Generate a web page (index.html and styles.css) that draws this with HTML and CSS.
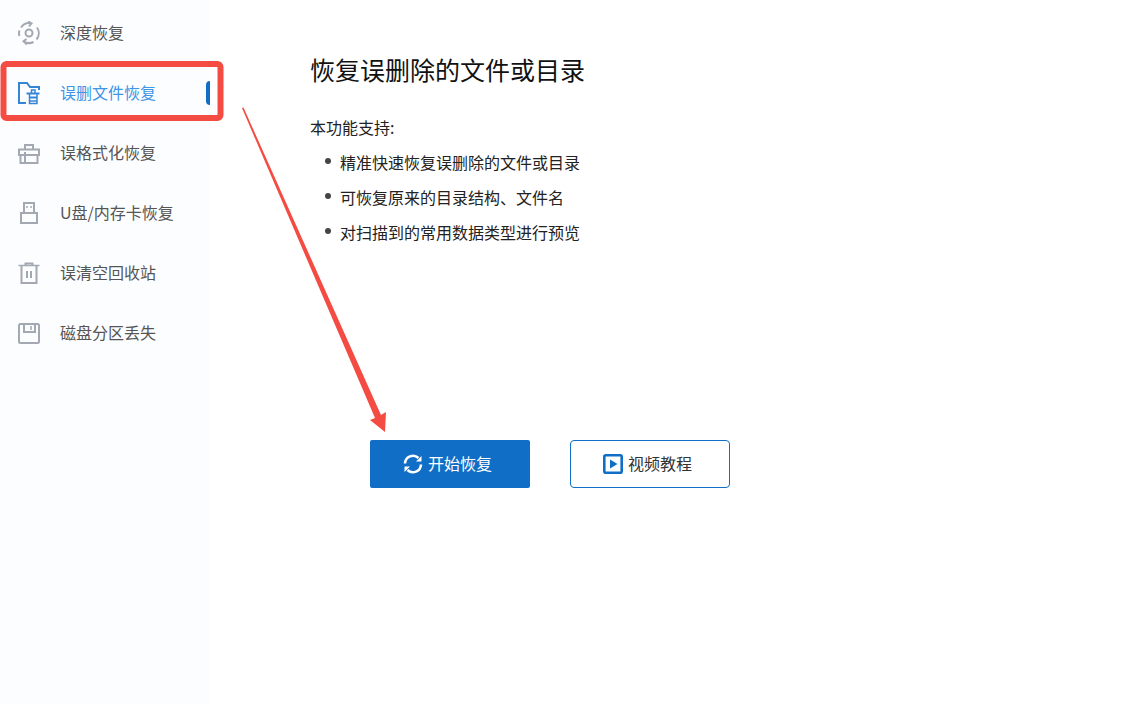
FILE: index.html
```html
<!DOCTYPE html>
<html lang="zh-CN">
<head>
  <meta charset="UTF-8">
  <title>误删文件恢复</title>
  <link rel="stylesheet" href="styles.css">
</head>
<body>
  <div class="page">
    <div class="sidebar">
      <div class="nav-item">
        <svg class="nav-icon" viewBox="0 0 24 24"><path d="M4 6.500A10 10 0 0 1 14.500 2.300M11 .5l3.500 1.800-2.500 3M20 6.500A10 10 0 0 1 19.500 18.500M16.500 21A10 10 0 0 1 6.500 20.300M10 23.500l-3.500-3.200 3-2.300M2.400 15A10 10 0 0 1 2.400 9.500"/><circle cx="12" cy="12" r="3.500"/></svg>
        <span>深度恢复</span>
      </div>
      <div class="nav-item active">
        <svg class="nav-icon" viewBox="0 0 24 24"><path d="M9 22H2V2h8l3 4h9v3"/><path d="M9.500 12.500h13"/><path class="thin" d="M12.500 12.500v10h7.500v-10M14.500 12V9h3.500v3"/><path d="M13 16.500h7"/><path class="thin" d="M13 20h7"/></svg>
        <span>误删文件恢复</span>
        <i class="marker"></i>
      </div>
      <div class="nav-item">
        <svg class="nav-icon" viewBox="0 0 24 24"><path d="M2 8.500h20v5.500H2zM3.500 14v8h17v-8M8 8.500V4h8v4.500M8 11v11"/></svg>
        <span>误格式化恢复</span>
      </div>
      <div class="nav-item">
        <svg class="nav-icon" viewBox="0 0 24 24"><path d="M4 12h16v10H4zM7 12V2h10v10"/><path class="thin" d="M10 5v2M14 5v2"/></svg>
        <span>U盘/内存卡恢复</span>
      </div>
      <div class="nav-item">
        <svg class="nav-icon" viewBox="0 0 24 24"><path class="thin" d="M1.500 4.500h21"/><path d="M4.500 5v17h15V5M8.500 4.500V2.500h7v2M10 10v7M14 10v7"/></svg>
        <span>误清空回收站</span>
      </div>
      <div class="nav-item">
        <svg class="nav-icon" viewBox="0 0 24 24"><rect x="2" y="3" width="20" height="19" rx="1.500"/><path d="M7 3v8h11V3"/><path class="thin" d="M14 5v4"/></svg>
        <span>磁盘分区丢失</span>
      </div>
    </div>

    <div class="main">
      <h1>恢复误删除的文件或目录</h1>
      <p class="intro">本功能支持:</p>
      <ul class="features">
        <li>精准快速恢复误删除的文件或目录</li>
        <li>可恢复原来的目录结构、文件名</li>
        <li>对扫描到的常用数据类型进行预览</li>
      </ul>
      <div class="actions">
        <button class="btn btn-primary">
          <svg class="btn-icon" viewBox="0 0 20 20"><path d="M2 9.500A8 8 0 0 1 15.500 4M18 10.500A8 8 0 0 1 4.500 16"/><path class="fill" d="M18.500 2v5.500h-5.500zM1.500 18v-5.500h5.500z"/></svg>
          开始恢复
        </button>
        <button class="btn btn-outline">
          <svg class="btn-icon" viewBox="0 0 20 20"><rect x="1.300" y="1.300" width="17.400" height="17.400" rx="1.500"/><path class="fill" d="M7 5.500l7.500 4.500-7.500 4.500z"/></svg>
          视频教程
        </button>
      </div>
    </div>
  </div>

  <!-- red annotation drawn over the page -->
  <svg class="annotation" viewBox="0 0 1124 704">
    <rect x="3.500" y="64" width="217" height="54" rx="3" fill="none" stroke="#f44c42" stroke-width="6"/>
    <path d="M242 108L243.500 107.500L381 415L386 412L385 432L370 420L375 418Z" fill="#f44c42"/>
  </svg>
</body>
</html>
```

FILE: styles.css
```css
* {
  box-sizing: border-box;
}

html, body {
  margin: 0;
  height: 100%;
}

body {
  font-family: "Noto Sans CJK SC", "Noto Sans", sans-serif;
  background: #fff;
  overflow: hidden;
}

.page {
  display: flex;
  height: 704px;
}

.sidebar {
  width: 210px;
  padding-top: 2px;
  background: #fcfdff;
  flex-shrink: 0;
}

.nav-item {
  display: flex;
  align-items: center;
  height: 60px;
  padding-left: 17px;
  font-size: 16px;
  color: #555;
}

.nav-icon {
  width: 24px;
  height: 24px;
  margin: 2px 19px 0 0;
  fill: none;
  stroke: #a2a9b2;
  stroke-width: 2;
}

.nav-icon .thin {
  stroke-width: 1.500;
}

.nav-item.active {
  color: #3f95e6;
}

.nav-item.active .nav-icon {
  stroke: #3585d6;
}

.marker {
  width: 4px;
  height: 24px;
  margin: 2px 0 0 auto;
  background: #116ec6;
  border-radius: 4px 0 0 4px;
}

.main {
  flex: 1;
  padding: 48px 0 0 100px;
}

h1 {
  margin: 0;
  font-size: 25px;
  font-weight: 400;
  line-height: 42px;
  color: #111;
}

.intro {
  margin: 25px 0 0;
  font-size: 16px;
  line-height: 24px;
  color: #222;
}

.features {
  margin: 11px 0 0;
  padding: 0 0 0 30px;
  list-style: none;
}

.features li {
  position: relative;
  height: 35px;
  font-size: 16px;
  line-height: 24px;
  color: #222;
}

.features li::before {
  content: "";
  position: absolute;
  left: -15px;
  top: 8px;
  width: 6px;
  height: 6px;
  border-radius: 50%;
  background: #444;
}

.actions {
  display: flex;
  gap: 40px;
  margin: 185px 0 0 60px;
}

.btn {
  display: flex;
  align-items: center;
  justify-content: center;
  gap: 5px;
  width: 160px;
  height: 48px;
  padding: 0 5px 2px 0;
  font: inherit;
  font-size: 16px;
  cursor: pointer;
}

.btn-primary {
  background: #116ec6;
  color: #fff;
  border: none;
  border-radius: 2px;
}

.btn-outline {
  background: #fff;
  color: #333;
  border: 1px solid #116ec6;
  border-radius: 4px;
}

.btn-icon {
  width: 20px;
  height: 20px;
  margin-top: 2px;
  fill: none;
  stroke-width: 2.600;
}

.btn-primary .btn-icon {
  stroke: #fff;
}

.btn-outline .btn-icon {
  stroke: #116ec6;
}

.btn-primary .fill {
  fill: #fff;
  stroke: none;
}

.btn-outline .fill {
  fill: #116ec6;
  stroke: none;
}

.annotation {
  position: absolute;
  left: 0;
  top: 0;
  width: 1124px;
  height: 704px;
  pointer-events: none;
}
```
